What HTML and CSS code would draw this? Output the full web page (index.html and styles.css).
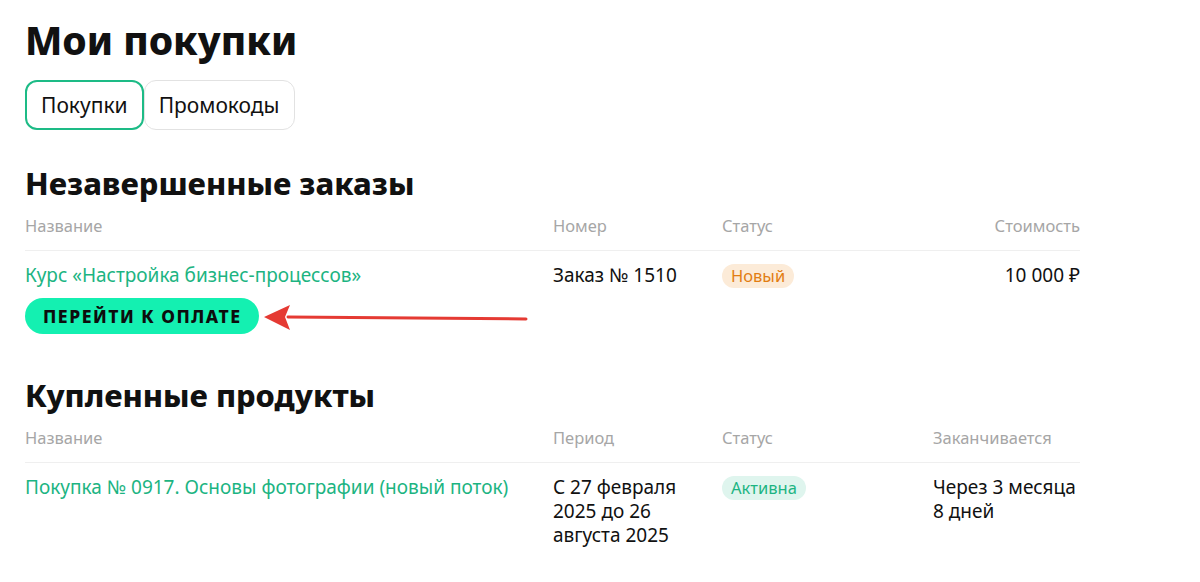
FILE: index.html
```html
<!DOCTYPE html>
<html lang="ru">
<head>
<meta charset="utf-8">
<title>Мои покупки</title>
<link rel="stylesheet" href="styles.css">
</head>
<body>
<main class="page">
  <h1 class="title">Мои покупки</h1>
  <nav class="tabs">
    <button class="tab tab-active">Покупки</button>
    <button class="tab">Промокоды</button>
  </nav>

  <section class="section">
    <h2 class="section-title">Незавершенные заказы</h2>
    <div class="table">
      <div class="row head">
        <div>Название</div>
        <div>Номер</div>
        <div>Статус</div>
        <div class="right">Стоимость</div>
      </div>
      <div class="row body">
        <div class="name-cell">
          <a class="link" href="#">Курс «Настройка бизнес-процессов»</a>
          <div class="pay-wrap">
            <button class="pay">Перейти к оплате</button>
            <svg class="arrow" width="270" height="34" viewBox="0 0 270 34">
              <path d="M24 18 L262 20" stroke="#e53a33" stroke-width="3" stroke-linecap="round" fill="none"/>
              <path d="M0 18 L26 6 L21 18 L26 31 Z" fill="#e53a33"/>
            </svg>
          </div>
        </div>
        <div>Заказ № 1510</div>
        <div><span class="badge badge-new">Новый</span></div>
        <div class="right">10 000 ₽</div>
      </div>
    </div>
  </section>

  <section class="section section-second">
    <h2 class="section-title">Купленные продукты</h2>
    <div class="table">
      <div class="row head">
        <div>Название</div>
        <div>Период</div>
        <div>Статус</div>
        <div>Заканчивается</div>
      </div>
      <div class="row body">
        <div><a class="link" href="#">Покупка № 0917. Основы фотографии (новый поток)</a></div>
        <div class="wrap">С 27 февраля 2025 до 26 августа 2025</div>
        <div><span class="badge badge-active">Активна</span></div>
        <div>Через 3 месяца 8 дней</div>
      </div>
    </div>
  </section>
</main>
</body>
</html>
```

FILE: styles.css
```css
* { box-sizing: border-box; }
html, body { margin: 0; padding: 0; background: #fff; }
body {
  font-family: "Noto Sans", "Open Sans", sans-serif;
  color: #111;
  font-size: 19px;
}
.page {
  padding: 16px 25px 0 25px;
  width: 1105px;
}
.title {
  margin: 0;
  font-size: 39px;
  line-height: 48px;
  font-weight: 800;
}
.tabs {
  display: flex;
  margin-top: 16px;
}
.tab {
  font-family: inherit;
  font-size: 21px;
  color: #111;
  background: #fff;
  height: 50px;
  padding: 0 14px;
  border: 1px solid #e2e2e2;
  border-radius: 12px;
  cursor: pointer;
}
.tab-active {
  border: 2px solid #1dbb86;
}
.section-title {
  margin: 35px 0 0 0;
  font-size: 30.8px;
  line-height: 36px;
  font-weight: 800;
}
.section-second .section-title { margin-top: 43px; }
.table { margin-top: 13px; }
.row {
  display: grid;
  grid-template-columns: 528px 169px 211px 147px;
}
.head {
  color: #a6a6a6;
  font-size: 16.5px;
  line-height: 24px;
  padding-bottom: 12px;
  border-bottom: 1px solid #efefef;
}
.body {
  padding-top: 12px;
  font-size: 19px;
  line-height: 24px;
}
.right { text-align: right; }
.wrap { padding-right: 20px; }
.link {
  color: #1cb482;
  text-decoration: none;
}
.pay-wrap {
  display: flex;
  align-items: center;
  margin-top: 11px;
}
.pay {
  font-family: inherit;
  height: 36px;
  padding: 0 17px 0 18px;
  border: none;
  border-radius: 18px;
  background: #14f0b1;
  color: #0d0d0d;
  font-size: 17.5px;
  font-weight: 800;
  letter-spacing: 1.5px;
  text-transform: uppercase;
  cursor: pointer;
}
.arrow { margin-left: 5px; }
.badge {
  display: inline-block;
  height: 24px;
  line-height: 24px;
  padding: 0 9px;
  border-radius: 12px;
  font-size: 16.5px;
}
.badge-new { background: #fcebd8; color: #e27d12; }
.badge-active { background: #dff5ee; color: #1cb482; }
```
